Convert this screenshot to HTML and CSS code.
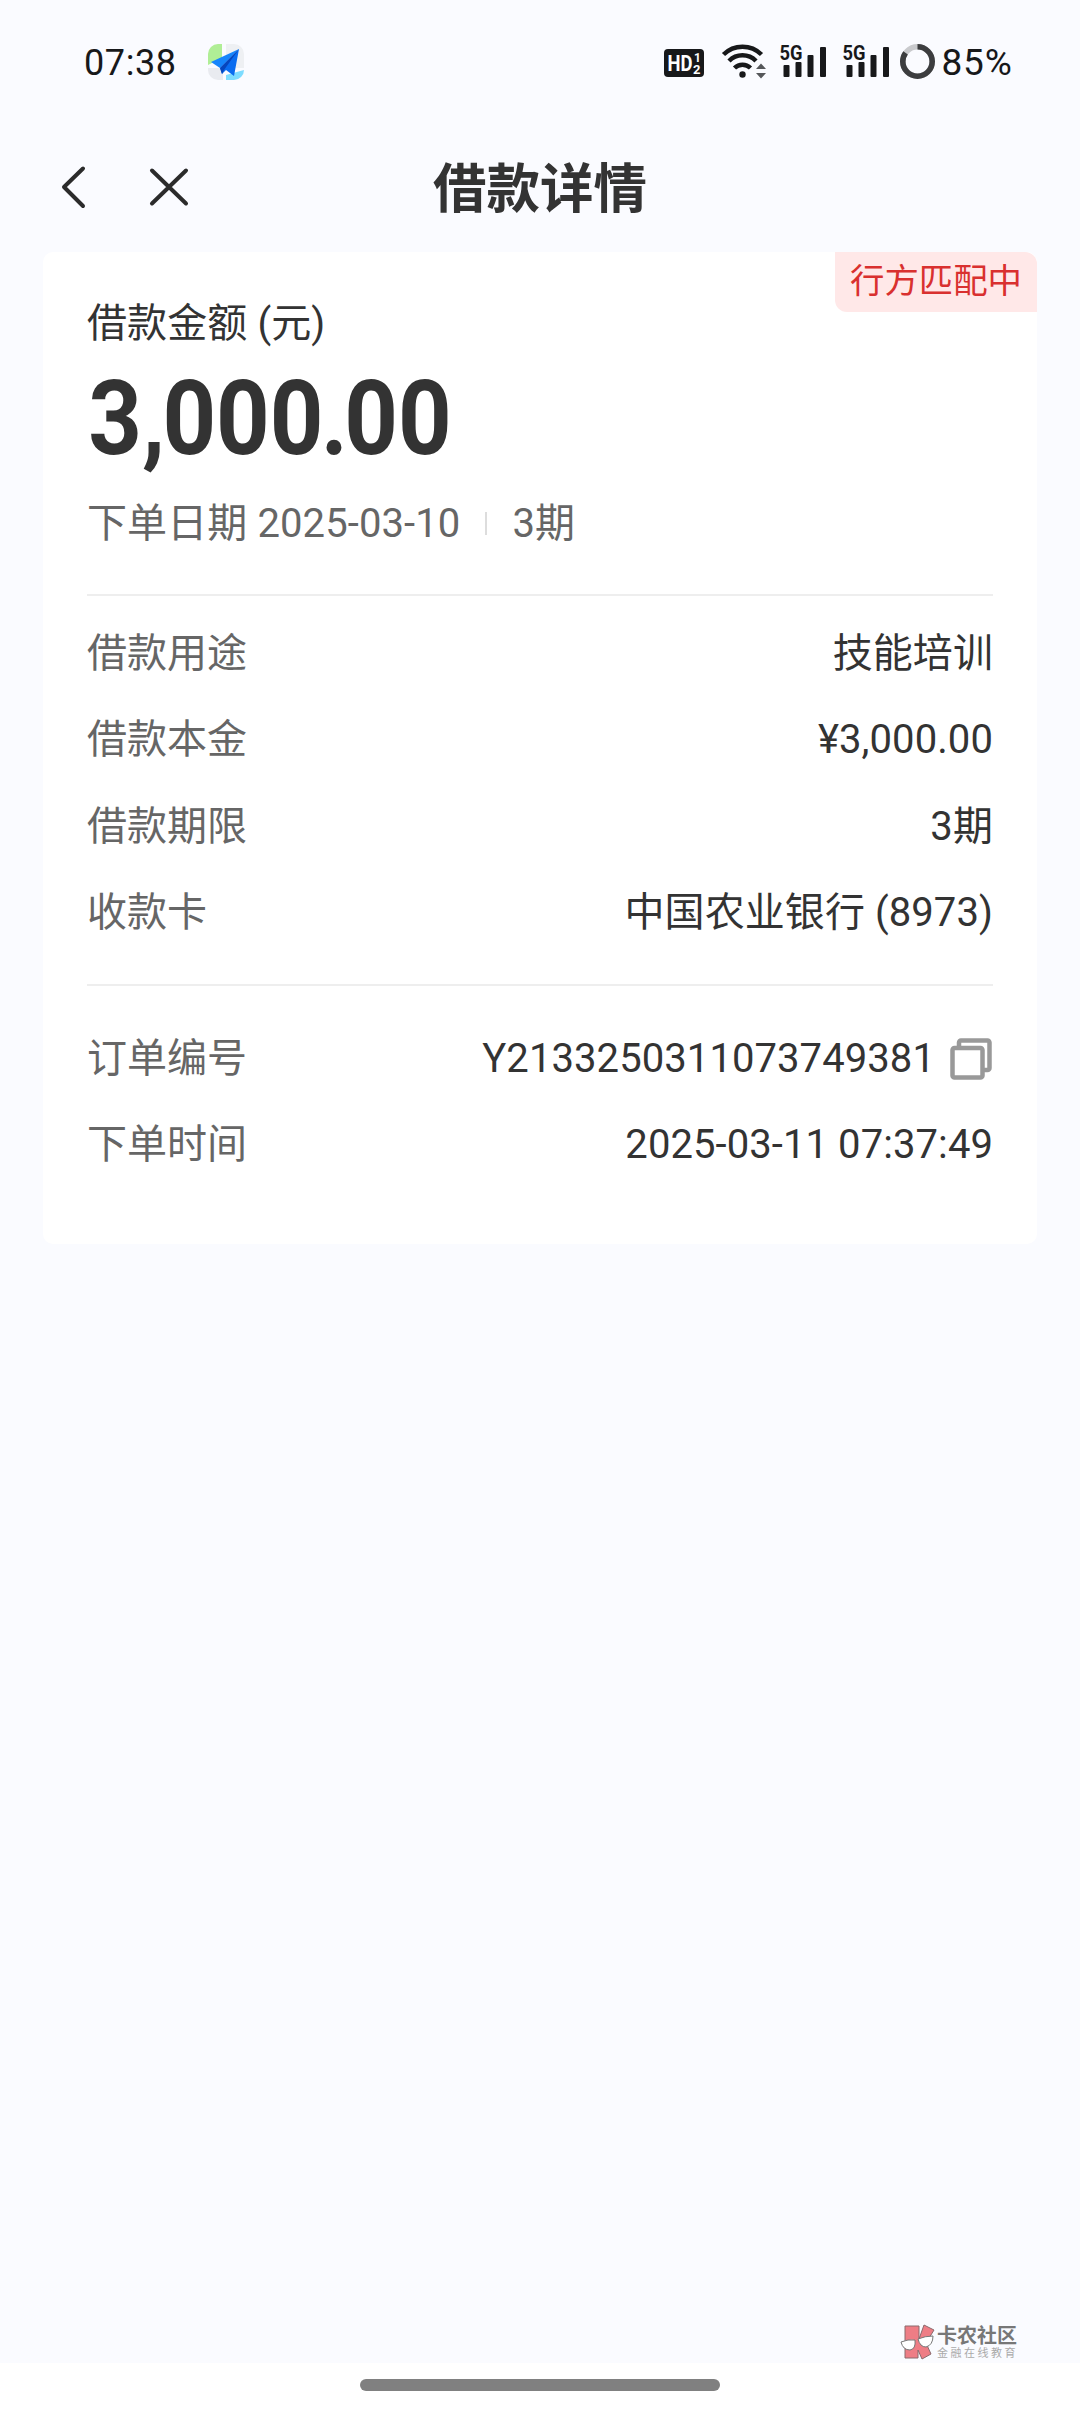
FILE: index.html
```html
<!DOCTYPE html>
<html lang="zh-CN">
<head>
<meta charset="utf-8">
<title>借款详情</title>
<link rel="stylesheet" href="styles.css">
</head>
<body>
<div class="screen">
  <header class="status">
    <div class="status-left">
      <span class="clock">07:38</span>
      <svg class="app-icon" width="36" height="36" viewBox="0 0 36 36">
        <path d="M14 0v14L0 21V10A10 10 0 0 1 10 0z" fill="#b0ee96"/>
        <path d="M18 0h8a10 10 0 0 1 10 10v14H18z" fill="#eef0f3"/>
        <path d="M0 24h15v12H10A10 10 0 0 1 0 26z" fill="#e9ebf0"/>
        <path d="M36 26a10 10 0 0 1-10 10h-8v-5l18-5z" fill="#7ddcff"/>
        <path d="M31 5 3 18l9 6z" fill="#1685fb"/>
        <path d="M31 5 12 24l2 6 4-4 8 6z" fill="#0a6cf0"/>
        <path d="M31 5 12 24l2 6 2-4z" fill="#0646bd"/>
      </svg>
    </div>
    <div class="status-right">
      <svg width="378" height="40" viewBox="662 40 378 40">
        <rect x="664" y="49" width="40" height="28" rx="4" fill="#17181a"/>
        <g fill="#fff" class="svg-bold">
          <text x="667.500" y="71" font-size="22" textLength="25" lengthAdjust="spacingAndGlyphs">HD</text>
          <text x="694" y="61.500" font-size="12">1</text>
          <text x="693" y="74" font-size="13">2</text>
        </g>
        <g fill="none" stroke="#17181a" stroke-width="4.500">
          <path d="M723.500 54.500a27 27 0 0 1 38 0"/>
          <path d="M729 61a19 19 0 0 1 27 0"/>
          <path d="M734.500 68a11.500 11.500 0 0 1 16 0"/>
        </g>
        <circle cx="742.500" cy="74.500" r="3.200" fill="#17181a"/>
        <path d="M756 69l5-5.500 5 5.500zM756 73h10l-5 5.500z" fill="#55575a"/>
        <g fill="#17181a">
          <g id="signal">
            <text class="svg-bold" x="779.500" y="60" font-size="21" textLength="23" lengthAdjust="spacingAndGlyphs">5G</text>
            <rect x="783.500" y="65" width="6" height="12" rx="1"/>
            <rect x="795.500" y="62" width="6" height="15" rx="1"/>
            <rect x="807.500" y="55" width="6" height="22" rx="1"/>
            <rect x="820" y="47" width="6" height="30" rx="1"/>
          </g>
          <use href="#signal" x="63"/>
        </g>
        <circle cx="917.500" cy="61.500" r="14.700" fill="none" stroke="#c9cacd" stroke-width="5.600"/>
        <circle cx="917.500" cy="61.500" r="14.700" fill="none" stroke="#3c3d3f" stroke-width="5.600" pathLength="100" stroke-dasharray="85 15" transform="rotate(-90 917.500 61.500)"/>
        <text class="battery" x="941.500" y="75">85%</text>
      </svg>
    </div>
  </header>

  <nav class="navbar">
    <div class="nav-actions">
      <svg width="30" height="48" viewBox="0 0 30 48"><path d="M25 4.500 6 23l19 19"/></svg>
      <svg width="48" height="48" viewBox="0 0 48 48"><path d="M7 6.500l34 33M41 6.500l-34 33"/></svg>
    </div>
    <h1 class="nav-title">借款详情</h1>
  </nav>

  <main class="card">
    <span class="badge">行方匹配中</span>
    <section class="summary">
      <div class="amount-label">借款金额 (元)</div>
      <div class="amount">3<span class="comma">,</span>000<span class="point">.</span>00</div>
      <div class="meta"><span>下单日期 2025-03-10</span><i class="meta-divider"></i><span>3期</span></div>
    </section>
    <dl class="rows loan">
      <div class="row"><dt>借款用途</dt><dd>技能培训</dd></div>
      <div class="row"><dt>借款本金</dt><dd>¥3,000.00</dd></div>
      <div class="row"><dt>借款期限</dt><dd>3期</dd></div>
      <div class="row"><dt>收款卡</dt><dd>中国农业银行 (8973)</dd></div>
    </dl>
    <dl class="rows order">
      <div class="row"><dt>订单编号</dt><dd>Y2133250311073749381
        <svg class="copy" width="42" height="42" viewBox="0 0 42 42"><path d="M9 8V4.500a2 2 0 0 1 2-2h26.500a2 2 0 0 1 2 2V30a2 2 0 0 1-2 2H34"/><rect x="2.500" y="10" width="30" height="29.500" rx="2"/></svg></dd></div>
      <div class="row"><dt>下单时间</dt><dd>2025-03-11 07:37:49</dd></div>
    </dl>
  </main>

  <div class="watermark">
    <svg width="36" height="36" viewBox="0 0 36 36">
      <path d="M5 2h14v13l5-14 10 5-8 13 5 11-9 5-4-9v8H5z" fill="#ee7d85" stroke="#8a6a6d"/>
      <path d="M1 18q7-3 14-2 1 9-5 10-7 0-9-8zM18 15q7-3 15-3 0 9-7 11-6 0-8-8z" fill="#fff" stroke="#777"/>
    </svg>
    <div>
      <div class="brand">卡农社区</div>
      <div class="tagline">金融在线教育</div>
    </div>
  </div>
  <footer class="home"><div class="home-bar"></div></footer>
</div>
</body>
</html>
```

FILE: styles.css
```css
* { box-sizing: border-box; }

body {
  margin: 0;
  background: #fafbff;
  color: #333;
  font-family: Roboto, "Noto Sans CJK SC", sans-serif;
}

.screen {
  display: flex;
  flex-direction: column;
  width: 1080px;
  height: 2412px;
  overflow: hidden;
}

.status {
  display: flex;
  justify-content: space-between;
  align-items: center;
  height: 124px;
  padding: 0 40px 0 84px;
  color: #17181a;
}

.status-left { display: flex; align-items: center; gap: 31px; }
.clock { padding-top: 2px; font-size: 36px; line-height: 44px; letter-spacing: .6px; }
.status-right { display: flex; margin-top: -4px; }
.status-right svg { overflow: visible; }
.svg-bold { font-weight: 700; }
.battery { font-size: 37px; letter-spacing: .8px; fill: #17181a; }

.navbar {
  display: grid;
  grid-template-columns: 1fr auto 1fr;
  align-items: center;
  height: 128px;
  padding: 0 58px;
}

.nav-actions {
  display: flex;
  align-items: center;
  gap: 57px;
}
.nav-actions svg {
  fill: none;
  stroke: #2b2b2b;
  stroke-width: 4;
  stroke-linecap: round;
  stroke-linejoin: round;
}
.nav-title { margin: 0; padding-top: 4px; font-size: 53.500px; line-height: 64px; font-weight: 700; }

.card {
  position: relative;
  height: 992px;
  margin: 0 43px;
  padding: 0 44px;
  border-radius: 10px;
  background: #fff;
}

.badge {
  position: absolute;
  top: 0;
  right: 0;
  width: 202px;
  height: 60px;
  border-radius: 0 12px;
  background: #ffe8e8;
  color: #d9302f;
  font-size: 34.400px;
  line-height: 59px;
  text-align: center;
}

.summary { height: 344px; padding-top: 42px; border-bottom: 2px solid #eee; }
.amount-label { font-size: 40px; line-height: 60px; letter-spacing: .1px; }
.amount {
  height: 128px;
  padding-left: 1.500px;
  font-size: 104px;
  line-height: 130px;
  font-weight: 700;
  transform: scaleX(.9);
  transform-origin: left;
}
.comma { margin-right: -3px; }
.point { margin: 0 -4px 0 -3px; }
.meta {
  display: flex;
  align-items: center;
  height: 60px;
  margin-top: 8px;
  color: #666;
  font-size: 40px;
  letter-spacing: .1px;
}
.meta-divider { width: 2px; height: 23px; margin: 7px 25px 0; background: #ddd; }

.rows { margin: 0; font-size: 40px; line-height: 86.400px; }
.loan { height: 390px; padding-top: 15px; border-bottom: 2px solid #eee; }
.order { padding-top: 29.500px; }
.row { display: flex; justify-content: space-between; align-items: baseline; height: 86.400px; }
.row dt { color: #666; }
.row dd { display: flex; align-items: center; gap: 15px; margin: 0; letter-spacing: .08px; }
.copy { margin: 1px 1px 0 0; fill: none; stroke: #999; stroke-width: 4.500; }

.watermark {
  display: flex;
  align-items: flex-start;
  gap: 1px;
  height: 40px;
  margin: auto 62px 0 auto;
  padding-top: 1px;
  color: #777;
}
.brand { padding-top: 2px; font-size: 20px; line-height: 20px; font-weight: 700; }
.tagline { margin-top: 1px; color: #aaa; font-size: 11px; line-height: 13px; letter-spacing: 2.500px; }

.home {
  display: flex;
  justify-content: center;
  height: 49px;
  padding-top: 16px;
  background: #fff;
}
.home-bar { width: 360px; height: 12px; border-radius: 6px; background: #808080; }
```
